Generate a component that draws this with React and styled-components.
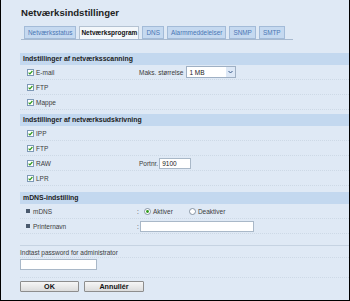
import React from 'react';
import styled, { createGlobalStyle } from 'styled-components';

const GlobalStyle = createGlobalStyle`
  html, body {
    margin: 0;
    padding: 0;
    background: #dfe9f5;
  }
  * {
    box-sizing: border-box;
  }
`;

const Page = styled.div`
  width: 350px;
  height: 301px;
  border: 1px solid #000;
  border-top: none;
  background: #dfe9f5;
  padding-left: 18px;
  font-family: "Liberation Sans", Arial, sans-serif;
  color: #222;
  overflow: hidden;
`;

const Title = styled.h1`
  margin: 0;
  padding: 7px 0 0 2px;
  font-size: 9.6px;
  line-height: 12px;
  font-weight: bold;
  color: #1e1e1e;
`;

const Tabs = styled.div`
  display: flex;
  align-items: flex-end;
  gap: 3px;
  margin-top: 8px;
  margin-left: 2px;
  width: 272px;
  height: 13px;
  padding-left: 3px;
  border-bottom: 1px solid #a7b9cf;
`;

const Tab = styled.div`
  height: 13px;
  padding: 0 ${p => (p.$active ? 1 : 3)}px;
  font-size: ${p => (p.$active ? 6.5 : 6.4)}px;
  line-height: 12px;
  font-weight: ${p => (p.$active ? 'bold' : 'normal')};
  color: ${p => (p.$active ? '#111' : '#4a76b4')};
  background: ${p => (p.$active ? '#f3f7fb' : '#c5d9f0')};
  border: 1px solid ${p => (p.$active ? '#b4c2d2' : '#a3bbd8')};
  border-bottom: ${p => (p.$active ? 'none' : '1px solid #a3bbd8')};
  white-space: nowrap;
`;

const Section = styled.section`
  margin-top: ${p => p.$top}px;
  margin-left: 1px;
`;

const SectionHead = styled.div`
  height: 12px;
  padding-left: 3px;
  background: #c3d8ef;
  font-size: 6.9px;
  line-height: 12px;
  font-weight: bold;
  color: #1c1c1c;
`;

const Row = styled.div`
  display: flex;
  align-items: center;
  height: 15px;
  border-bottom: 1px dotted #cdd9e6;
  font-size: 6.5px;
  color: #3c3c3c;
`;

const Cell = styled.div`
  display: flex;
  align-items: center;
  width: ${p => p.$w}px;
  padding-left: ${p => p.$pad || 0}px;
  gap: ${p => p.$gap || 0}px;
`;

const Label = styled.span`
  white-space: nowrap;
`;

const Bullet = styled.span`
  width: 4px;
  height: 4px;
  margin-right: 3px;
  background: #4a5a6e;
`;

const Field = styled.div`
  width: ${p => p.$w}px;
  height: 11px;
  background: #fff;
  border: 1px solid #a9b8c8;
  font-size: 6.5px;
  line-height: 9px;
  padding-left: 2px;
  color: #222;
`;

const Select = styled.div`
  display: flex;
  align-items: center;
  justify-content: space-between;
  width: 50px;
  height: 12px;
  background: #fff;
  border: 1px solid #9fb0c4;
  font-size: 6.5px;
  padding-left: 2px;
  color: #222;
`;

const Arrow = styled.span`
  display: flex;
  align-items: center;
  justify-content: center;
  width: 9px;
  height: 10px;
  background: #dde8f6;
`;

const Radio = styled.span`
  display: flex;
  align-items: center;
  gap: 2px;
  margin-right: ${p => p.$mr || 0}px;
`;

const Colon = styled.span`
  width: 3px;
  margin-right: ${p => p.$mr}px;
`;

const Footer = styled.div`
  margin-top: 11px;
  margin-left: 1px;
  border-top: 1px solid #c6d3e2;
`;

const FooterLabel = styled.div`
  height: 10px;
  margin-top: 2px;
  font-size: 6.5px;
  line-height: 10px;
  color: #3c3c3c;
  border-bottom: 1px dotted #cdd9e6;
`;

const PasswordRow = styled.div`
  height: 20px;
  padding-top: 1px;
  border-bottom: 1px dotted #cdd9e6;
`;

const Buttons = styled.div`
  display: flex;
  gap: 5px;
  margin-top: 3px;
`;

const Button = styled.button`
  width: ${p => p.$w}px;
  height: 11px;
  padding: 0;
  font-family: "Liberation Sans", Arial, sans-serif;
  font-size: 7.2px;
  font-weight: bold;
  line-height: 9px;
  color: #111;
  background: linear-gradient(#f6f6f6, #dcdcdc);
  border: 1px solid #8d8d8d;
  border-radius: 1px;
`;

const Check = () => (
  <svg width="7" height="7" viewBox="0 0 7 7">
    <rect x="0.5" y="0.5" width="6" height="6" fill="#fff" stroke="#7d98b6" />
    <path d="M1.6 3.6 L2.9 4.9 L5.4 2" fill="none" stroke="#2f9a1c" strokeWidth="1.2" />
  </svg>
);

const RadioDot = ({ on }) => (
  <svg width="7" height="7" viewBox="0 0 7 7">
    <circle cx="3.5" cy="3.5" r="3" fill="#fff" stroke="#6f7f90" strokeWidth="0.8" />
    {on && <circle cx="3.5" cy="3.5" r="1.4" fill="#2f9a1c" />}
  </svg>
);

const CheckRow = ({ label, children }) => (
  <Row>
    <Cell $w={119} $pad={7} $gap={2}>
      <Check />
      <Label>{label}</Label>
    </Cell>
    {children}
  </Row>
);

const tabs = ['Netværksstatus', 'Netværksprogram', 'DNS', 'Alarmmeddelelser', 'SNMP', 'SMTP'];

export default function App() {
  return (
    <>
      <GlobalStyle />
      <Page>
        <Title>Netværksindstillinger</Title>
        <Tabs>
          {tabs.map(t => (
            <Tab key={t} $active={t === 'Netværksprogram'}>{t}</Tab>
          ))}
        </Tabs>

        <Section $top={13}>
          <SectionHead>Indstillinger af netværksscanning</SectionHead>
          <CheckRow label="E-mail">
            <Cell $gap={3}>
              <Label>Maks. størrelse</Label>
              <Select>
                1 MB
                <Arrow>
                  <svg width="5" height="4" viewBox="0 0 5 4">
                    <path d="M0.5 1 L2.5 3 L4.5 1" fill="none" stroke="#3a5a8a" strokeWidth="1" />
                  </svg>
                </Arrow>
              </Select>
            </Cell>
          </CheckRow>
          <CheckRow label="FTP" />
          <CheckRow label="Mappe" />
        </Section>

        <Section $top={4}>
          <SectionHead>Indstillinger af netværksudskrivning</SectionHead>
          <CheckRow label="IPP" />
          <CheckRow label="FTP" />
          <CheckRow label="RAW">
            <Cell $gap={1}>
              <Label>Portnr.</Label>
              <Field $w={32}>9100</Field>
            </Cell>
          </CheckRow>
          <CheckRow label="LPR" />
        </Section>

        <Section $top={6}>
          <SectionHead>mDNS-indstilling</SectionHead>
          <Row>
            <Cell $w={117} $pad={6}>
              <Bullet />
              <Label>mDNS</Label>
            </Cell>
            <Colon $mr={4}>:</Colon>
            <Radio $mr={16}>
              <RadioDot on />
              <Label>Aktiver</Label>
            </Radio>
            <Radio>
              <RadioDot />
              <Label>Deaktiver</Label>
            </Radio>
          </Row>
          <Row>
            <Cell $w={117} $pad={6}>
              <Bullet />
              <Label>Printernavn</Label>
            </Cell>
            <Colon $mr={0}>:</Colon>
            <Field $w={114} />
          </Row>
        </Section>

        <Footer>
          <FooterLabel>Indtast password for administrator</FooterLabel>
          <PasswordRow>
            <Field $w={77} />
          </PasswordRow>
          <Buttons>
            <Button $w={59}>OK</Button>
            <Button $w={60}>Annullér</Button>
          </Buttons>
        </Footer>
      </Page>
    </>
  );
}
